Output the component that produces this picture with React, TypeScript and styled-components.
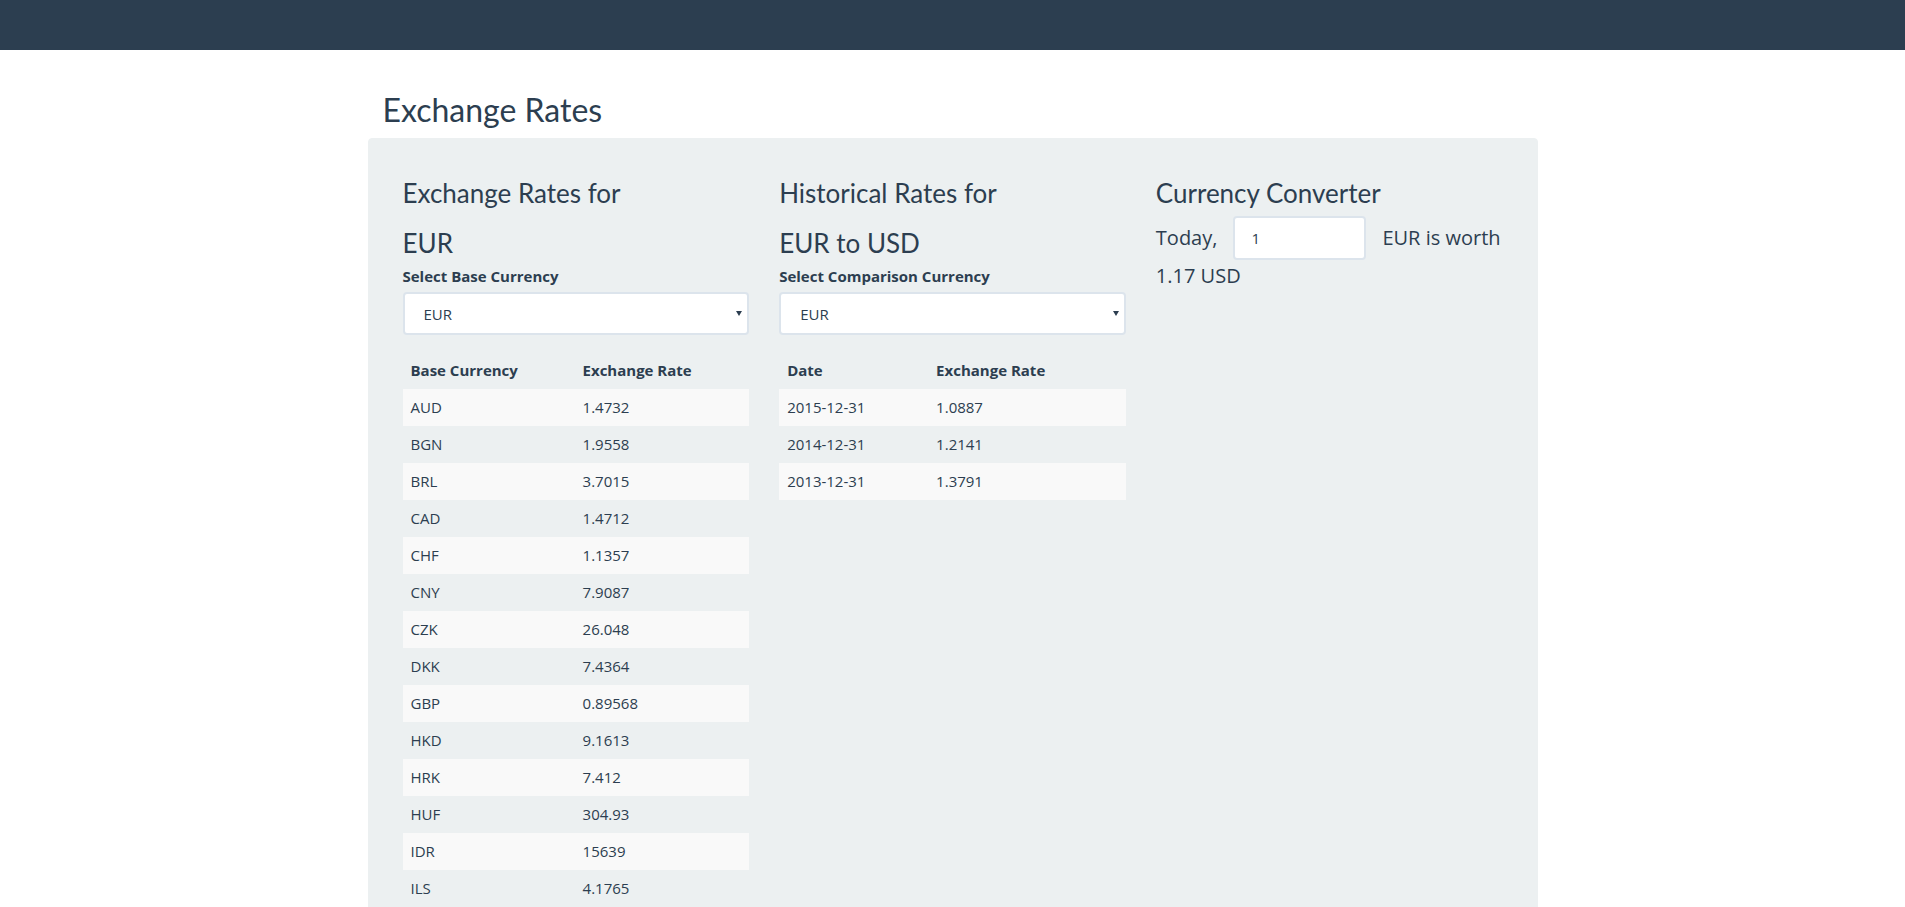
import React, { useState } from 'react';
import styled, { createGlobalStyle } from 'styled-components';

const GlobalStyle = createGlobalStyle`
  body {
    margin: 0;
    background: #fff;
    color: #2c3e50;
    font-family: "Open Sans", "Liberation Sans", sans-serif;
    font-size: 15px;
    line-height: 1.42857;
  }
  * { box-sizing: border-box; }
`;

const Navbar = styled.nav`
  height: 50px;
  background: #2c3e50;
  margin-bottom: 21px;
`;

const Container = styled.div`
  display: flow-root;
  width: 1170px;
  margin: 0 auto;
  padding: 0 15px;
`;

const PageTitle = styled.h2`
  font-family: Lato, "Liberation Sans", sans-serif;
  font-weight: 400;
  font-size: 32px;
  line-height: 1.1;
  margin: 21px 0 10.5px;
`;

const Well = styled.div`
  margin: 0 -15px;
  padding: 19px;
  min-height: 800px;
  background: #ecf0f1;
  border: 1px solid #ecf0f1;
  border-radius: 4px;
  display: grid;
  grid-template-columns: repeat(3, 1fr);
  align-items: start;
`;

const Column = styled.div`
  padding: 0 15px;
`;

const Heading = styled.h3`
  font-family: Lato, "Liberation Sans", sans-serif;
  font-weight: 400;
  font-size: 26px;
  line-height: 1.1;
  margin: 21.5px 0 8px;
`;

const Label = styled.label`
  display: block;
  font-weight: 700;
  margin-bottom: 5px;
`;

const SelectWrap = styled.div`
  position: relative;
  margin-bottom: 17px;

  &::after {
    content: '';
    position: absolute;
    right: 7px;
    top: 19px;
    border-left: 3px solid transparent;
    border-right: 3px solid transparent;
    border-top: 5px solid #2c3e50;
    pointer-events: none;
  }
`;

const Select = styled.select`
  appearance: none;
  display: block;
  width: 100%;
  height: 43px;
  padding: 0 19px;
  font-family: "Open Sans", "Liberation Sans", sans-serif;
  font-size: 15px;
  color: #2c3e50;
  background: #fff;
  border: 2px solid #dce4ec;
  border-radius: 4px;
  outline: none;
`;

const Table = styled.table`
  width: 100%;
  border-collapse: collapse;
  margin-bottom: 21px;

  th, td {
    padding: 8px;
    text-align: left;
    line-height: 21px;
    vertical-align: top;
  }
  th { font-weight: 700; }
  tbody tr:nth-child(odd) { background: #f9f9f9; }
`;

const ConverterRow = styled.div`
  display: flex;
  align-items: center;
  gap: 16px;
  font-size: 20px;
`;

const AmountInput = styled.input`
  width: 133px;
  height: 44px;
  padding: 0 16px;
  font-family: "Open Sans", "Liberation Sans", sans-serif;
  font-size: 15px;
  color: #2c3e50;
  background: #fff;
  border: 2px solid #dce4ec;
  border-radius: 4px;
  outline: none;
`;

const Result = styled.div`
  margin-top: 2px;
  font-size: 20px;
  line-height: 1.42857;
`;

const rates: [string, string][] = [
  ['AUD', '1.4732'], ['BGN', '1.9558'], ['BRL', '3.7015'], ['CAD', '1.4712'],
  ['CHF', '1.1357'], ['CNY', '7.9087'], ['CZK', '26.048'], ['DKK', '7.4364'],
  ['GBP', '0.89568'], ['HKD', '9.1613'], ['HRK', '7.412'], ['HUF', '304.93'],
  ['IDR', '15639'], ['ILS', '4.1765'], ['INR', '75.354'], ['JPY', '132.06'],
  ['KRW', '1325.7'], ['MXN', '22.058'], ['MYR', '4.9711'], ['NOK', '9.3285'],
  ['NZD', '1.6346'], ['PHP', '59.632'], ['PLN', '4.2547'], ['RON', '4.5838'],
  ['RUB', '69.193'], ['SEK', '9.5485'], ['SGD', '1.6059'], ['THB', '39.198'],
  ['TRY', '4.1883'], ['USD', '1.1718'], ['ZAR', '15.684'],
];

const history: [string, string][] = [
  ['2015-12-31', '1.0887'],
  ['2014-12-31', '1.2141'],
  ['2013-12-31', '1.3791'],
];

const currencies = ['EUR', ...rates.map(([c]) => c)];

const App: React.FC = () => {
  const [base, setBase] = useState('EUR');
  const [compare, setCompare] = useState('EUR');
  const [amount, setAmount] = useState('1');

  return (
    <>
      <GlobalStyle />
      <Navbar />
      <Container>
        <PageTitle>Exchange Rates</PageTitle>
        <Well>
          <Column>
            <Heading>Exchange Rates for</Heading>
            <Heading>{base}</Heading>
            <Label>Select Base Currency</Label>
            <SelectWrap>
              <Select value={base} onChange={e => setBase(e.target.value)}>
                {currencies.map(c => <option key={c}>{c}</option>)}
              </Select>
            </SelectWrap>
            <Table>
              <thead>
                <tr><th>Base Currency</th><th>Exchange Rate</th></tr>
              </thead>
              <tbody>
                {rates.map(([c, r]) => (
                  <tr key={c}><td>{c}</td><td>{r}</td></tr>
                ))}
              </tbody>
            </Table>
          </Column>
          <Column>
            <Heading>Historical Rates for</Heading>
            <Heading>EUR to USD</Heading>
            <Label>Select Comparison Currency</Label>
            <SelectWrap>
              <Select value={compare} onChange={e => setCompare(e.target.value)}>
                {currencies.map(c => <option key={c}>{c}</option>)}
              </Select>
            </SelectWrap>
            <Table>
              <thead>
                <tr><th>Date</th><th>Exchange Rate</th></tr>
              </thead>
              <tbody>
                {history.map(([d, r]) => (
                  <tr key={d}><td>{d}</td><td>{r}</td></tr>
                ))}
              </tbody>
            </Table>
          </Column>
          <Column>
            <Heading>Currency Converter</Heading>
            <ConverterRow>
              <span>Today,</span>
              <AmountInput value={amount} onChange={e => setAmount(e.target.value)} />
              <span>EUR is worth</span>
            </ConverterRow>
            <Result>1.17 USD</Result>
          </Column>
        </Well>
      </Container>
    </>
  );
};

export default App;
